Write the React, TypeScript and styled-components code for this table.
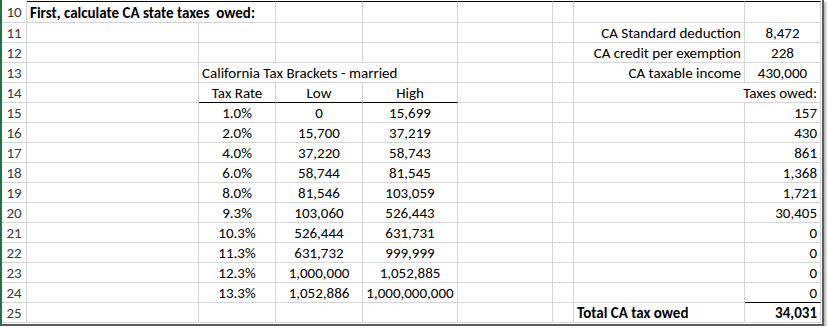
import React from "react";
import styled, { createGlobalStyle } from "styled-components";

const GlobalStyle = createGlobalStyle`
  html, body {
    margin: 0;
    padding: 0;
    background: #ffffff;
  }
  body {
    font-family: Calibri, Carlito, Lato, "Liberation Sans", sans-serif;
    font-size: 15px;
    color: #000;
  }
`;

const GRID = "#d4d4d4";

const Frame = styled.div`
  display: inline-block;
  vertical-align: top;
  padding: 1px 1px 1px 0;
  border-left: 2px solid #217346;
  border-right: 2px solid #5c5c5c;
  border-bottom: 2px solid #5c5c5c;
  box-shadow: 2px 2px 2px rgba(0, 0, 0, 0.3);
`;

const Sheet = styled.div`
  display: grid;
  grid-template-columns: 25px 172px 77px 87px 95px 95px 21px 171px 76px;
  grid-template-rows: 22px repeat(15, 20px);
`;

const RowHead = styled.div`
  box-sizing: border-box;
  display: flex;
  align-items: center;
  justify-content: center;
  padding-top: 1px;
  border-right: 1px solid ${GRID};
  border-bottom: 1px solid ${GRID};
  color: #3b3b3b;
`;

type Align = "left" | "center" | "right";

const justify = { left: "flex-start", center: "center", right: "flex-end" };

const Cell = styled.div<{
  $span: number;
  $align: Align;
  $bold?: boolean;
  $rule?: boolean;
  $top?: boolean;
}>`
  box-sizing: border-box;
  grid-column: span ${(p) => p.$span};
  display: flex;
  align-items: center;
  justify-content: ${(p) => justify[p.$align]};
  padding: 1px 3px 0;
  white-space: pre;
  font-weight: ${(p) => (p.$bold ? 700 : 400)};
  border-right: 1px solid ${GRID};
  border-bottom: 1px solid ${(p) => (p.$rule ? "#000" : GRID)};
  border-top: ${(p) => (p.$top ? "1px solid #000" : "none")};
`;

interface Spec {
  text?: string;
  span?: number;
  align?: Align;
  bold?: boolean;
  rule?: boolean;
}

const empty = (n: number): Spec[] => Array.from({ length: n }, () => ({}));

const brackets = [
  ["1.0%", "0", "15,699", "157"],
  ["2.0%", "15,700", "37,219", "430"],
  ["4.0%", "37,220", "58,743", "861"],
  ["6.0%", "58,744", "81,545", "1,368"],
  ["8.0%", "81,546", "103,059", "1,721"],
  ["9.3%", "103,060", "526,443", "30,405"],
  ["10.3%", "526,444", "631,731", "0"],
  ["11.3%", "631,732", "999,999", "0"],
  ["12.3%", "1,000,000", "1,052,885", "0"],
  ["13.3%", "1,052,886", "1,000,000,000", "0"],
];

const rows: { num: number; cells: Spec[] }[] = [
  {
    num: 10,
    cells: [
      { text: "First, calculate CA state taxes  owed:", span: 2, bold: true },
      ...empty(6),
    ],
  },
  {
    num: 11,
    cells: [
      ...empty(6),
      { text: "CA Standard deduction", align: "right" },
      { text: "8,472", align: "center" },
    ],
  },
  {
    num: 12,
    cells: [
      ...empty(6),
      { text: "CA credit per exemption", align: "right" },
      { text: "228", align: "center" },
    ],
  },
  {
    num: 13,
    cells: [
      {},
      { text: "California Tax Brackets - married", span: 3 },
      {},
      {},
      { text: "CA taxable income", align: "right" },
      { text: "430,000", align: "center" },
    ],
  },
  {
    num: 14,
    cells: [
      {},
      { text: "Tax Rate", align: "center", rule: true },
      { text: "Low", align: "center", rule: true },
      { text: "High", align: "center", rule: true },
      {},
      {},
      { text: "Taxes owed:", span: 2, align: "right" },
    ],
  },
  ...brackets.map(([rate, low, high, owed], i) => ({
    num: 15 + i,
    cells: [
      {},
      { text: rate, align: "center" as Align },
      { text: low, align: "center" as Align },
      { text: high, align: "center" as Align },
      {},
      {},
      {},
      { text: owed, align: "right" as Align, rule: i === brackets.length - 1 },
    ],
  })),
  {
    num: 25,
    cells: [
      ...empty(6),
      { text: "Total CA tax owed", bold: true },
      { text: "34,031", align: "right", bold: true },
    ],
  },
];

export default function App() {
  return (
    <>
      <GlobalStyle />
      <Frame>
        <Sheet>
          {rows.map((row) => (
            <React.Fragment key={row.num}>
              <RowHead>{row.num}</RowHead>
              {row.cells.map((c, i) => (
                <Cell
                  key={i}
                  $span={c.span ?? 1}
                  $align={c.align ?? "left"}
                  $bold={c.bold}
                  $rule={c.rule}
                  $top={row.num === 10}
                >
                  {c.text}
                </Cell>
              ))}
            </React.Fragment>
          ))}
        </Sheet>
      </Frame>
    </>
  );
}
